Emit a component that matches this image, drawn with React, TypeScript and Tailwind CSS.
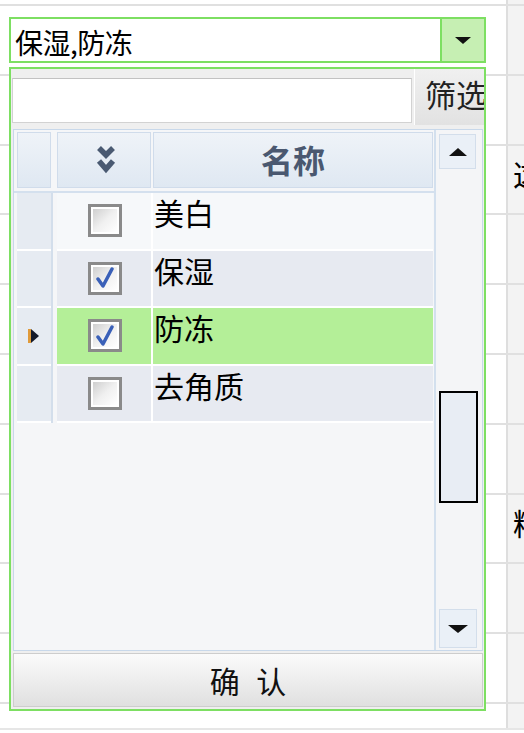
const rows = [
  { name: '美白', checked: false, bg: 'bg-[#f6f8fa]', current: false },
  { name: '保湿', checked: true, bg: 'bg-[#e7eaf1]', current: false },
  { name: '防冻', checked: true, bg: 'bg-[#b4ef98]', current: true },
  { name: '去角质', checked: false, bg: 'bg-[#e7eaf1]', current: false },
]

const bgRows = [
  { h: 'h-[69.8px]', text: '' },
  { h: 'h-[69.8px]', text: '' },
  { h: 'h-[69.8px]', text: '这' },
  { h: 'h-[69.8px]', text: '' },
  { h: 'h-[69.8px]', text: '' },
  { h: 'h-[69.8px]', text: '' },
  { h: 'h-[69.8px]', text: '' },
  { h: 'h-[69.8px]', text: '精' },
  { h: 'h-[69.8px]', text: '' },
  { h: 'h-[69.8px]', text: '' },
  { h: 'h-[26px]', text: '' },
]

function Tri({ dir, w, h }: { dir: 'up' | 'down'; w: number; h: number }) {
  const pts = dir === 'down' ? `0,0 ${w},0 ${w / 2},${h}` : `0,${h} ${w},${h} ${w / 2},0`
  return (
    <svg width={w} height={h} viewBox={`0 0 ${w} ${h}`}>
      <polygon points={pts} fill="#111" />
    </svg>
  )
}

function CheckBox({ checked }: { checked: boolean }) {
  return (
    <div className="w-[34px] h-[33px] border-[3px] border-[#8a8a8a] bg-white p-[2px]">
      <div className="w-full h-full bg-linear-to-br from-[#cfcfcf] via-[#f0f0f0] to-[#ffffff] flex items-center justify-center">
        {checked && (
          <svg width="20" height="22" viewBox="0 0 20 22">
            <path d="M3 12 L8 19 L17 2" fill="none" stroke="#3a60b8" strokeWidth="3.5" strokeLinecap="round" strokeLinejoin="round" />
          </svg>
        )}
      </div>
    </div>
  )
}

export default function App() {
  return (
    <div className="relative w-[524px] h-[733px] overflow-hidden bg-white font-['Noto_Sans_CJK_SC',sans-serif] text-black">
      {/* table underneath */}
      <div className="flex flex-col">
        <div className="h-[4px] flex">
          <div className="flex-1" />
          <div className="w-[18px] bg-[#f3f3f3] border-l-2 border-[#dedede]" />
        </div>
        {bgRows.map((r, i) => (
          <div key={i} className={`${r.h} flex border-t-2 border-[#e0e0e0]`}>
            <div className="flex-1" />
            <div className="w-[18px] bg-[#f3f3f3] border-l-2 border-[#dedede] overflow-hidden pl-[5px] pt-[12px] text-[30px] leading-none whitespace-nowrap">
              {r.text}
            </div>
          </div>
        ))}
        <div className="border-t-2 border-[#e6e6e6]" />
      </div>

      {/* combo with open dropdown */}
      <div className="absolute left-[9px] top-[17px] w-[477px]">
        <div className="h-[46px] flex border-2 border-[#7ddf62] bg-white">
          <div className="flex-1 flex items-center pl-[4px] pt-[3px] text-[28px] leading-none whitespace-nowrap tracking-[-0.5px]">保湿,防冻</div>
          <div className="w-[44px] bg-[#c6efb3] border-l-2 border-[#7ddf62] flex items-center justify-center">
            <Tri dir="down" w={16} h={7} />
          </div>
        </div>

        <div className="mt-[4px] h-[644px] border-2 border-[#7ddf62] bg-[#efefef] flex flex-col">
          {/* filter */}
          <div className="h-[56px] flex">
            <div className="ml-[1px] mt-[9px] w-[400px] h-[45px] bg-white border border-[#d2d2d2] border-t-[#c2c2c2]" />
            <div className="ml-[2px] flex-1 bg-linear-to-b from-[#f0f0f0] to-[#e2e2e2] border-l border-white overflow-hidden pl-[10px] pt-[9px] text-[31px] leading-none whitespace-nowrap text-[#222]">
              筛选
            </div>
          </div>

          {/* grid */}
          <div className="mt-[4px] ml-[2px] mr-[1px] h-[522px] border border-[#c8d8ea] bg-[#f5f6f8] flex">
            <div className="flex-1 flex flex-col pt-[2px]">
              <div className="h-[56px] flex">
                <div className="ml-[3px] w-[34px] bg-linear-to-b from-[#eff3f8] to-[#dfe8f2] border border-[#d0dceb]" />
                <div className="ml-[6px] w-[94px] bg-linear-to-b from-[#eff3f8] to-[#dfe8f2] border border-[#d0dceb] flex items-center justify-center pl-[4px]">
                  <svg width="20" height="30" viewBox="0 0 20 30">
                    <polyline points="3,3 10,10 17,3" fill="none" stroke="#4a5a72" strokeWidth="5.5" strokeLinejoin="miter" />
                    <polyline points="3,16 10,24 17,16" fill="none" stroke="#4a5a72" strokeWidth="5.5" strokeLinejoin="miter" />
                  </svg>
                </div>
                <div className="ml-[2px] w-[280px] bg-linear-to-b from-[#eff3f8] to-[#dfe8f2] border border-[#d0dceb] flex items-center justify-center pb-[2px] text-[32px] font-bold leading-none text-[#4a5870]">
                  名称
                </div>
              </div>
              <div className="h-[5px] border-b-2 border-[#d4e0ee]" />
              {rows.map((r) => (
                <div key={r.name} className="h-[57.5px] flex">
                  <div className="ml-[3px] w-[34px] bg-[#e6ebf2] border-b-2 border-white flex items-center justify-center">
                    {r.current && (
                      <svg width="12" height="16" viewBox="0 0 12 16">
                        <polygon points="0,1 3,1 3,15 0,15" fill="#e09a3a" />
                        <polygon points="3,1 11,8 3,15" fill="#141a2a" />
                      </svg>
                    )}
                  </div>
                  <div className="w-[6px] border-l-2 border-[#d3deeb] bg-[#f5f6f8]" />
                  <div className={`w-[94px] ${r.bg} border-b-2 border-white flex items-center justify-center pl-[2px]`}>
                    <CheckBox checked={r.checked} />
                  </div>
                  <div className={`w-[282px] ${r.bg} border-l-2 border-b-2 border-white pl-[1px] pt-[4px] text-[30px] leading-none`}>
                    {r.name}
                  </div>
                </div>
              ))}
            </div>

            {/* scrollbar */}
            <div className="w-[48px] border-l-2 border-[#d3e0ee] bg-[#f4f5f7] flex flex-col">
              <div className="ml-[3px] mt-[4px] w-[37px] h-[35px] bg-[#eaf0f7] border border-[#d3deeb] flex items-center justify-center">
                <Tri dir="up" w={18} h={8} />
              </div>
              <div className="ml-[3px] mt-[222px] w-[39px] h-[112px] border-2 border-black bg-[#e8edf4]" />
              <div className="ml-[3px] mt-auto mb-[2px] w-[38px] h-[39px] bg-[#eaf0f7] border border-[#d3deeb] flex items-center justify-center">
                <Tri dir="down" w={20} h={8} />
              </div>
            </div>
          </div>

          {/* confirm */}
          <div className="mt-[2px] ml-[2px] mr-[1px] h-[54px] bg-linear-to-b from-[#fbfbfb] to-[#e0e0e0] border border-[#cdcdcd] flex items-center justify-center text-[30px] leading-none text-[#111] [word-spacing:10px]">
            确 认
          </div>
        </div>
      </div>
    </div>
  )
}
